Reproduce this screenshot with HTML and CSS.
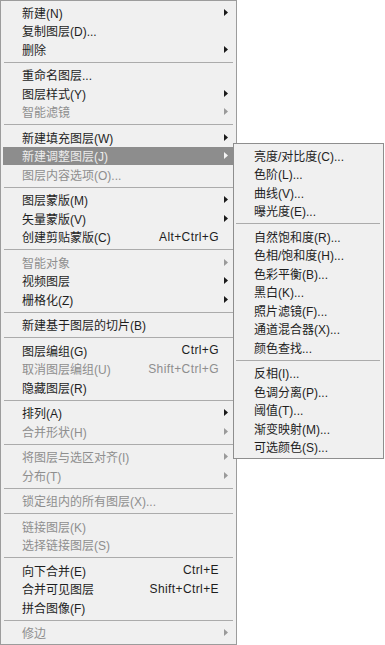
FILE: index.html
```html
<!DOCTYPE html>
<html>
  <head>
    <title>图层菜单</title>
    <link rel="stylesheet" href="styles.css">
  </head>
  <body>
    <div class="menu">
      <div class="item"><span class="label">新建(N)</span><span class="arrow"><svg width="4" height="7"><polygon points="0,0 4,3.5 0,7" /></svg></span></div>
      <div class="item"><span class="label">复制图层(D)...</span><span class="arrow"></span></div>
      <div class="item"><span class="label">删除</span><span class="arrow"><svg width="4" height="7"><polygon points="0,0 4,3.5 0,7" /></svg></span></div>
      <div class="sep"></div>
      <div class="item"><span class="label">重命名图层...</span><span class="arrow"></span></div>
      <div class="item"><span class="label">图层样式(Y)</span><span class="arrow"><svg width="4" height="7"><polygon points="0,0 4,3.5 0,7" /></svg></span></div>
      <div class="item off"><span class="label">智能滤镜</span><span class="arrow"><svg width="4" height="7"><polygon points="0,0 4,3.5 0,7" /></svg></span></div>
      <div class="sep"></div>
      <div class="item"><span class="label">新建填充图层(W)</span><span class="arrow"><svg width="4" height="7"><polygon points="0,0 4,3.5 0,7" /></svg></span></div>
      <div class="item active">
        <span class="label">新建调整图层(J)</span><span class="arrow"><svg width="4" height="7"><polygon points="0,0 4,3.5 0,7" /></svg></span>
        <!-- open submenu -->
        <div class="submenu">
          <div class="item"><span class="label">亮度/对比度(C)...</span></div>
          <div class="item"><span class="label">色阶(L)...</span></div>
          <div class="item"><span class="label">曲线(V)...</span></div>
          <div class="item"><span class="label">曝光度(E)...</span></div>
          <div class="sep"></div>
          <div class="item"><span class="label">自然饱和度(R)...</span></div>
          <div class="item"><span class="label">色相/饱和度(H)...</span></div>
          <div class="item"><span class="label">色彩平衡(B)...</span></div>
          <div class="item"><span class="label">黑白(K)...</span></div>
          <div class="item"><span class="label">照片滤镜(F)...</span></div>
          <div class="item"><span class="label">通道混合器(X)...</span></div>
          <div class="item"><span class="label">颜色查找...</span></div>
          <div class="sep"></div>
          <div class="item"><span class="label">反相(I)...</span></div>
          <div class="item"><span class="label">色调分离(P)...</span></div>
          <div class="item"><span class="label">阈值(T)...</span></div>
          <div class="item"><span class="label">渐变映射(M)...</span></div>
          <div class="item"><span class="label">可选颜色(S)...</span></div>
        </div>
      </div>
      <div class="item off"><span class="label">图层内容选项(O)...</span><span class="arrow"></span></div>
      <div class="sep"></div>
      <div class="item"><span class="label">图层蒙版(M)</span><span class="arrow"><svg width="4" height="7"><polygon points="0,0 4,3.5 0,7" /></svg></span></div>
      <div class="item"><span class="label">矢量蒙版(V)</span><span class="arrow"><svg width="4" height="7"><polygon points="0,0 4,3.5 0,7" /></svg></span></div>
      <div class="item"><span class="label">创建剪贴蒙版(C)</span><span class="key">Alt+Ctrl+G</span><span class="arrow"></span></div>
      <div class="sep"></div>
      <div class="item off"><span class="label">智能对象</span><span class="arrow"><svg width="4" height="7"><polygon points="0,0 4,3.5 0,7" /></svg></span></div>
      <div class="item"><span class="label">视频图层</span><span class="arrow"><svg width="4" height="7"><polygon points="0,0 4,3.5 0,7" /></svg></span></div>
      <div class="item"><span class="label">栅格化(Z)</span><span class="arrow"><svg width="4" height="7"><polygon points="0,0 4,3.5 0,7" /></svg></span></div>
      <div class="sep"></div>
      <div class="item"><span class="label">新建基于图层的切片(B)</span><span class="arrow"></span></div>
      <div class="sep"></div>
      <div class="item"><span class="label">图层编组(G)</span><span class="key">Ctrl+G</span><span class="arrow"></span></div>
      <div class="item off"><span class="label">取消图层编组(U)</span><span class="key">Shift+Ctrl+G</span><span class="arrow"></span></div>
      <div class="item"><span class="label">隐藏图层(R)</span><span class="arrow"></span></div>
      <div class="sep"></div>
      <div class="item"><span class="label">排列(A)</span><span class="arrow"><svg width="4" height="7"><polygon points="0,0 4,3.5 0,7" /></svg></span></div>
      <div class="item off"><span class="label">合并形状(H)</span><span class="arrow"><svg width="4" height="7"><polygon points="0,0 4,3.5 0,7" /></svg></span></div>
      <div class="sep"></div>
      <div class="item off"><span class="label">将图层与选区对齐(I)</span><span class="arrow"><svg width="4" height="7"><polygon points="0,0 4,3.5 0,7" /></svg></span></div>
      <div class="item off"><span class="label">分布(T)</span><span class="arrow"><svg width="4" height="7"><polygon points="0,0 4,3.5 0,7" /></svg></span></div>
      <div class="sep"></div>
      <div class="item off"><span class="label">锁定组内的所有图层(X)...</span><span class="arrow"></span></div>
      <div class="sep"></div>
      <div class="item off"><span class="label">链接图层(K)</span><span class="arrow"></span></div>
      <div class="item off"><span class="label">选择链接图层(S)</span><span class="arrow"></span></div>
      <div class="sep"></div>
      <div class="item"><span class="label">向下合并(E)</span><span class="key">Ctrl+E</span><span class="arrow"></span></div>
      <div class="item"><span class="label">合并可见图层</span><span class="key">Shift+Ctrl+E</span><span class="arrow"></span></div>
      <div class="item"><span class="label">拼合图像(F)</span><span class="arrow"></span></div>
      <div class="sep"></div>
      <div class="item off"><span class="label">修边</span><span class="arrow"><svg width="4" height="7"><polygon points="0,0 4,3.5 0,7" /></svg></span></div>
    </div>
  </body>
</html>
```

FILE: styles.css
```css
body {
  margin: 0;
  background-color: #ffffff;
  font-family: "Liberation Sans", "Noto Sans CJK SC", sans-serif;
  font-size: 12px;
  color: #1e1e1e;
}

.menu {
  width: 237px;
  box-sizing: border-box;
  background-color: #f0f0f0;
  border: 1px solid #9c9c9c;
  padding: 2px 0;
}

.item {
  position: relative;
  display: flex;
  align-items: center;
  height: 18.5px;
  margin: 0 3px 0 2px;
  padding-left: 19px;
}

.label {
  flex-grow: 1;
  white-space: nowrap;
}

.key {
  white-space: nowrap;
  letter-spacing: 0.4px;
}

.arrow {
  width: 9px;
  padding-left: 5px;
  display: flex;
  align-items: center;
}

.arrow svg {
  fill: #1a1a1a;
}

.off {
  color: #8e8e8e;
}

.off .arrow svg {
  fill: #9a9a9a;
}

.active {
  background-color: #8d8d8d;
  color: #ececec;
}

.active > .arrow svg {
  fill: #f4f4f4;
}

.sep {
  height: 1px;
  background-color: #ababab;
  margin: 3px 3px 3px 3px;
}

.submenu {
  position: absolute;
  top: -3.5px;
  left: 230px;
  width: 151px;
  box-sizing: border-box;
  background-color: #f0f0f0;
  border: 1px solid #8e8e8e;
  padding: 2px 0;
  color: #1e1e1e;
}

.submenu .item {
  padding-left: 18px;
}

.submenu .sep {
  margin: 3px 3px 3px 2px;
}
```
